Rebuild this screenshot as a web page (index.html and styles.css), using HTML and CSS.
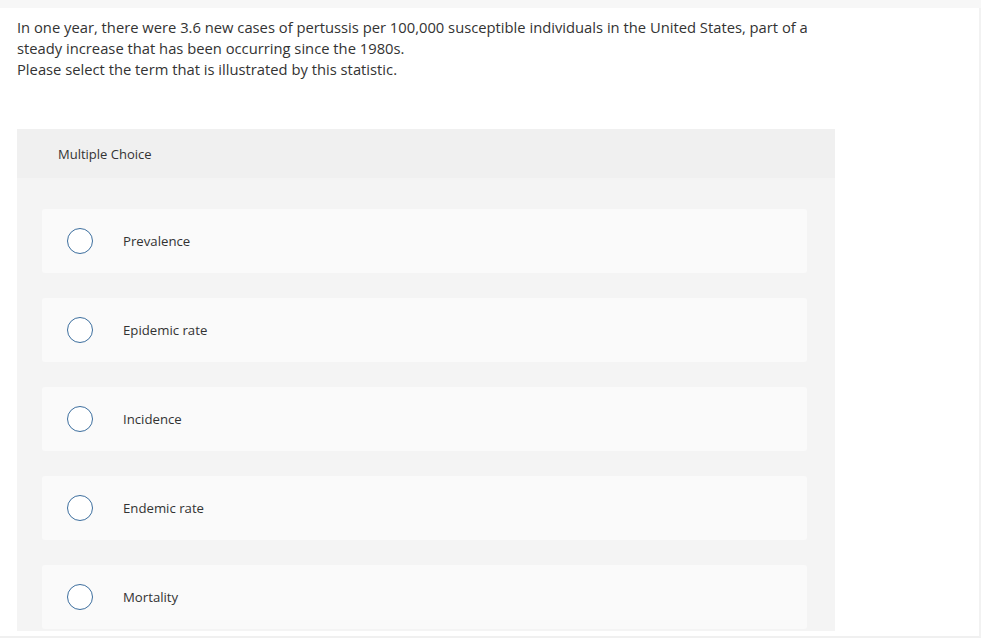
FILE: index.html
```html
<!DOCTYPE html>
<html>
<head>
<meta charset="utf-8">
<link rel="stylesheet" href="styles.css">
</head>
<body>
<div class="topbar"></div>
<div class="page">
  <div class="question">
    <p>In one year, there were 3.6 new cases of pertussis per 100,000 susceptible individuals in the United States, part of a steady increase that has been occurring since the 1980s.</p>
    <p>Please select the term that is illustrated by this statistic.</p>
  </div>
  <div class="panel">
    <div class="panel-head">Multiple Choice</div>
    <div class="panel-body">
      <div class="option"><span class="radio"></span><span class="label">Prevalence</span></div>
      <div class="option"><span class="radio"></span><span class="label">Epidemic rate</span></div>
      <div class="option"><span class="radio"></span><span class="label">Incidence</span></div>
      <div class="option"><span class="radio"></span><span class="label">Endemic rate</span></div>
      <div class="option"><span class="radio"></span><span class="label">Mortality</span></div>
    </div>
  </div>
</div>
</body>
</html>
```
FILE: styles.css
```css
html, body {
  margin: 0;
  padding: 0;
  background: #ffffff;
}
body {
  font-family: "Open Sans", "Liberation Sans", sans-serif;
  color: #333333;
  width: 981px;
  height: 638px;
  overflow: hidden;
}
.topbar {
  height: 8px;
  background: #f7f7f7;
}
.page {
  width: 979px;
  height: 628px;
  border-right: 2px solid #f2f2f2;
  border-bottom: 2px solid #f0f0f0;
  box-sizing: content-box;
  overflow: hidden;
}
.question {
  padding: 9px 0 0 17px;
  width: 812px;
  font-size: 14.75px;
  line-height: 21px;
  color: #333;
}
.question p {
  margin: 0;
}
.panel {
  margin: 49px 0 0 17px;
  width: 818px;
}
.panel-head {
  height: 49px;
  background: #f0f0f0;
  padding-left: 41px;
  display: flex;
  align-items: center;
  font-size: 13px;
  color: #333;
}
.panel-body {
  background: #f4f4f4;
  padding: 31px 28px 0 25px;
  height: 453px;
  box-sizing: border-box;
  overflow: hidden;
  display: flex;
  flex-direction: column;
  gap: 25px;
}
.option {
  flex: none;
  height: 64px;
  background: #fafafa;
  border-radius: 3px;
  display: flex;
  align-items: center;
  padding-left: 25px;
}
.radio {
  width: 24px;
  height: 24px;
  border: 1.5px solid #3c6e9e;
  border-radius: 50%;
  background: #fff;
  flex: none;
}
.label {
  margin-left: 30px;
  font-size: 13.2px;
  color: #333;
}
```
